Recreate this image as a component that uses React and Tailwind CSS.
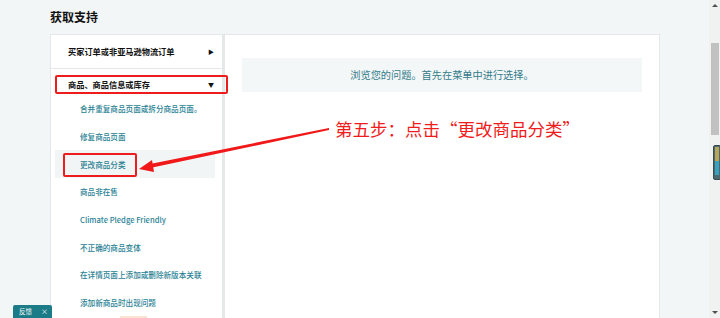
import React from "react";

const items = [
  "合并重复商品页面或拆分商品页面。",
  "修复商品页面",
  "更改商品分类",
  "商品非在售",
  "Climate Pledge Friendly",
  "不正确的商品变体",
  "在详情页面上添加或删除新版本关联",
  "添加新商品时出现问题",
];

export default function App() {
  return (
    <div
      className="relative flex h-[318px] w-[720px] overflow-hidden bg-[#f3f6f6]"
      style={{ fontFamily: '"Noto Sans CJK SC", "Noto Sans", sans-serif' }}
    >
      {/* main */}
      <div className="flex flex-1 flex-col pl-[50px]">
        <div className="flex h-[34px] items-center pb-[1px] text-[12px] font-bold leading-none text-[#111]">
          获取支持
        </div>
        <div className="flex w-[610px] flex-1">
          {/* left panel */}
          <div className="flex w-[175px] flex-col border-l border-t border-r-[3px] border-[#e4e8e8] bg-white">
            <div className="flex h-[34px] items-center justify-between border-b border-[#e4e8e8] pl-[17px] pr-[8px] text-[8.2px] font-bold text-[#111]">
              <span>买家订单或非亚马逊物流订单</span>
              <span className="text-[6px]">▶</span>
            </div>
            <div className="flex h-[26px] items-center justify-between pl-[17px] pr-[8px] pt-[4px] text-[8.2px] font-bold text-[#111]">
              <span>商品、商品信息或库存</span>
              <span className="text-[6px]">▼</span>
            </div>
            <div className="flex flex-col pl-[4px] pr-[7px]">
              {items.map((t, i) => (
                <div
                  key={i}
                  className={
                    "flex h-[27.7px] items-center pl-[25px] text-[7.6px] font-medium text-[#2a8295] " +
                    (i === 2 ? "bg-[#f2f5f6]" : "")
                  }
                >
                  {t}
                </div>
              ))}
            </div>
          </div>
          {/* right panel */}
          <div className="flex flex-1 flex-col border-r border-t border-[#e4e8e8] bg-white px-[17px] pt-[23px]">
            <div className="flex h-[34px] items-center justify-center bg-[#f3f7f8] text-[10.2px] text-[#357b8a]">
              浏览您的问题。首先在菜单中进行选择。
            </div>
          </div>
        </div>
      </div>
      {/* spacer + scrollbar */}
      <div className="w-[49px]" />
      <div className="relative flex w-[11px] flex-col items-center bg-[#f0f1f1]">
        <div className="mt-[4px] h-0 w-0 border-x-[3px] border-b-[3px] border-x-transparent border-b-[#505050]" />
        <div className="ml-[1px] mt-[36px] h-[92px] w-[8px] bg-[#c1c1c1]" />
        <div className="flex-1" />
        <div className="mb-[4px] h-0 w-0 border-x-[3px] border-t-[3px] border-x-transparent border-t-[#505050]" />
        <div className="absolute left-[4px] top-[145px] flex h-[35px] w-[8px] flex-col rounded-[2px] border-[1.5px] border-[#3b4a4e] bg-[#4b6a70] p-[1px]">
          <div className="h-[14px] w-full bg-[#b7a55a]" />
          <div className="h-[14px] w-full bg-[#3aa0c0]" />
        </div>
      </div>

      {/* annotations */}
      <div className="absolute left-[55px] top-[75px] h-[19px] w-[173px] rounded-[2px] border-2 border-[#ee1c1c]" />
      <div className="absolute left-[63px] top-[153px] h-[24px] w-[74px] rounded-[2px] border-2 border-[#ee1c1c]" />
      <svg className="absolute left-0 top-0" width="720" height="318">
        <polygon points="329,128 329,130 150,168 150,164" fill="#f01818" />
        <polygon points="139,169 152,160 154,172" fill="#f01818" />
      </svg>
      <div className="absolute left-[335px] top-[117px] text-[17.5px] leading-[24px] text-[#f01c1c]">
        第五步：点击“更改商品分类”
      </div>

      {/* feedback tab */}
      <div className="absolute left-[13px] top-[305px] flex h-[13px] w-[39px] items-center justify-between rounded-t-[2px] bg-[#1b7c88] pl-[6px] pr-[4px] text-[6.5px] text-white">
        <span>反馈</span>
        <span className="text-[7px]">×</span>
      </div>
      <div className="absolute left-[120px] top-[316px] h-[2px] w-[27px] bg-[#fbe3cf]" />
    </div>
  );
}
